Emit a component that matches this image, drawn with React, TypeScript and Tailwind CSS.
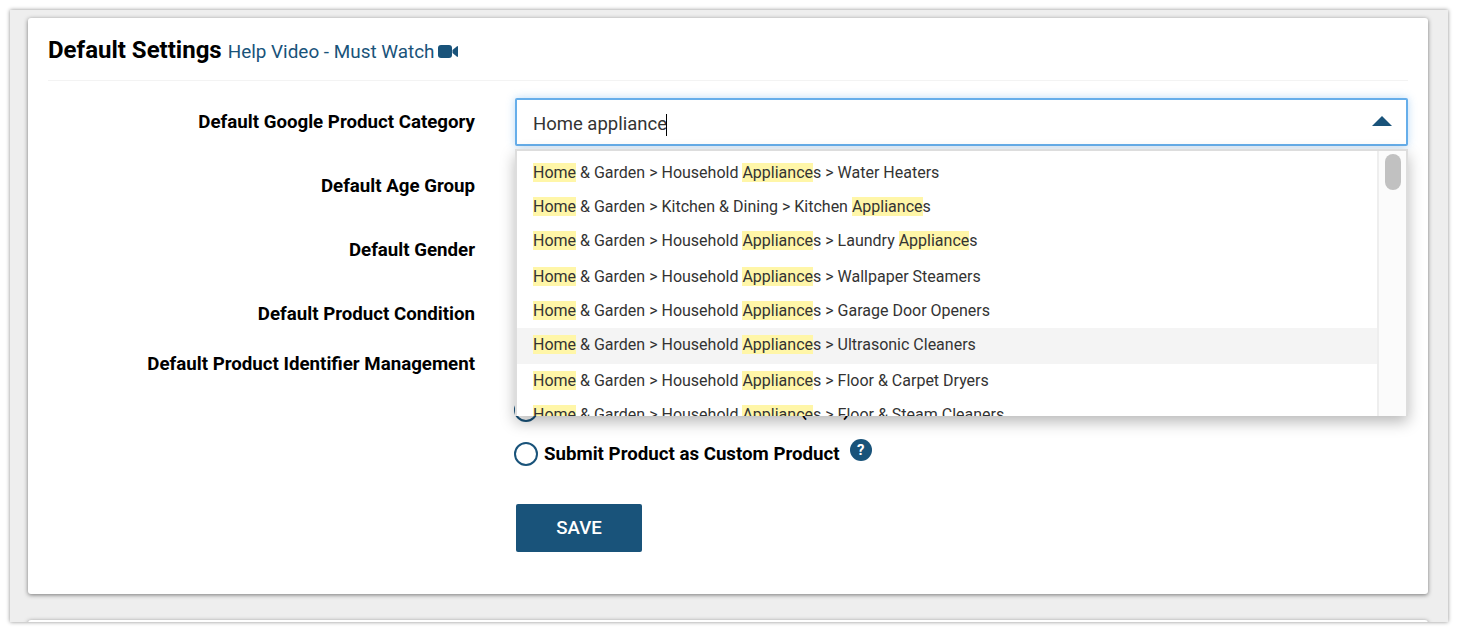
const font = "font-['Roboto',sans-serif]";

// rows of the open dropdown: the part after "Home & Garden > ..."
const options = [
    { h: "h-[34px]", middle: " & Garden > Household ", match: "Appliance", rest: "s > Water Heaters" },
    { h: "h-[34px]", middle: " & Garden > Kitchen & Dining > Kitchen ", match: "Appliance", rest: "s" },
    { h: "h-9", middle: " & Garden > Household ", match: "Appliance", rest: "s > Laundry ", match2: "Appliance", rest2: "s" },
    { h: "h-[34px]", middle: " & Garden > Household ", match: "Appliance", rest: "s > Wallpaper Steamers" },
    { h: "h-[34px]", middle: " & Garden > Household ", match: "Appliance", rest: "s > Garage Door Openers" },
    { h: "h-9", middle: " & Garden > Household ", match: "Appliance", rest: "s > Ultrasonic Cleaners", hover: true },
    { h: "h-[34px]", middle: " & Garden > Household ", match: "Appliance", rest: "s > Floor & Carpet Dryers" },
    { h: "h-[34px]", middle: " & Garden > Household ", match: "Appliance", rest: "s > Floor & Steam Cleaners" },
];

function Mark({ children }: { children: string }) {
    return <span className="bg-[#fff6a8]">{children}</span>;
}

function FieldRow({ label }: { label: string }) {
    return (
        <div className="flex h-16">
            <div className="w-[427px] pt-[9px] text-right text-[18.7px] leading-[28px] font-bold text-black">{label}</div>
        </div>
    );
}

export default function App() {
    return (
        <div className={`${font} h-[632px] w-[1458px] overflow-hidden bg-white pt-[10px] pl-[10px]`}>
            <div className="h-[612px] w-[1438px] overflow-hidden bg-[#eeeeee] pt-2 pr-5 pl-[18px] shadow-[0_0_4px_rgba(0,0,0,0.45)]">
                <div className="h-[576px] rounded-[3px] bg-white px-5 shadow-[0_1px_4px_rgba(0,0,0,0.5)]">
                    <div className="flex h-[63px] items-center gap-[6px] border-b border-[#f3f3f3] pt-[2px]">
                        <h1 className="text-[24px] leading-8 font-bold text-black">Default Settings</h1>
                        <a className="flex items-center gap-[4px] pt-[3px] text-[18.9px] leading-6 text-[#19537a]">
                            Help Video - Must Watch
                            <svg viewBox="0 0 20 13" className="h-[13px] w-5 fill-[#19537a]" aria-hidden="true">
                                <rect width="14" height="13" rx="3" />
                                <path d="M14.5 5 19 1.2c.4-.3 1-.1 1 .5v9.6c0 .6-.6.8-1 .5L14.5 8z" />
                            </svg>
                        </a>
                    </div>

                    <div className="relative pt-[18px]">
                        <FieldRow label="Default Google Product Category" />
                        <FieldRow label="Default Age Group" />
                        <FieldRow label="Default Gender" />
                        <div className="flex h-[50px]">
                            <div className="w-[427px] pt-[9px] text-right text-[18.7px] leading-[28px] font-bold text-black">
                                Default Product Condition
                            </div>
                        </div>
                        <div className="flex">
                            <div className="w-[427px] pt-[9px] text-right text-[18.7px] leading-[28px] font-bold text-black">
                                Default Product Identifier Management
                            </div>
                            <div className="ml-[39px] flex flex-col pt-[57px]">
                                <div className="flex h-6 items-center gap-[6px] text-[18.7px] font-bold text-black">
                                    <span className="h-6 w-6 rounded-full border-2 border-[#19537a]" />
                                    <span className="whitespace-nowrap">Submit Product with Identifier (UPC)</span>
                                </div>
                                <div className="mt-5 flex h-6 items-center gap-[6px] text-[18.7px] font-bold text-black">
                                    <span className="h-6 w-6 rounded-full border-2 border-[#19537a]" />
                                    <span className="whitespace-nowrap">Submit Product as Custom Product</span>
                                    <span className="mb-2 ml-1 flex h-[22px] w-[22px] items-center justify-center rounded-full bg-[#19537a] text-[15px] font-bold text-white">
                                        ?
                                    </span>
                                </div>
                                <button
                                    type="button"
                                    className="mt-[38px] ml-[2px] h-12 w-[126px] rounded-[2px] bg-[#19537a] text-[18.7px] font-medium text-white"
                                >
                                    SAVE
                                </button>
                            </div>
                        </div>

                        {/* focused combobox */}
                        <div className="absolute top-[17px] left-[467px] flex h-12 w-[893px] items-center justify-between rounded-[2px] border-2 border-[#66aeea] bg-white pr-[14px] pl-[16px] shadow-[0_0_8px_rgba(102,174,234,0.45)]">
                            <span className="flex items-center pt-[6px] text-[18.5px] text-[#333333]">
                                Home appliance
                                <span className="-ml-px h-[22px] w-px bg-black" />
                            </span>
                            <span className="mb-[2px] h-0 w-0 border-x-[10px] border-b-[10px] border-x-transparent border-b-[#19537a]" />
                        </div>

                        {/* dropdown panel */}
                        <div className="absolute top-[68px] left-[467px] flex h-[267px] w-[893px] overflow-hidden border-x-2 border-t-2 border-[#dddddd] bg-white shadow-[0_6px_14px_rgba(0,0,0,0.28)]">
                            <ul className="flex-1 overflow-hidden pt-[5px]">
                                {options.map((o, i) => (
                                    <li
                                        key={i}
                                        className={`${o.h} whitespace-pre pl-4 text-[16px] leading-[34px] text-[#333333] ${o.hover ? "bg-[#f4f4f4]" : ""}`}
                                    >
                                        <Mark>Home</Mark>
                                        {o.middle}
                                        <Mark>{o.match}</Mark>
                                        {o.rest}
                                        {o.match2 && <Mark>{o.match2}</Mark>}
                                        {o.rest2}
                                    </li>
                                ))}
                            </ul>
                            <div className="w-[29px] border-l-2 border-[#eeeeee] bg-[#fbfbfb] pt-[3px] pl-[6px]">
                                <div className="h-9 w-4 rounded-full bg-[#c1c1c1]" />
                            </div>
                        </div>
                    </div>
                </div>
                <div className="mt-[26px] h-4 rounded-[3px] bg-white shadow-[0_1px_4px_rgba(0,0,0,0.5)]" />
            </div>
        </div>
    );
}
